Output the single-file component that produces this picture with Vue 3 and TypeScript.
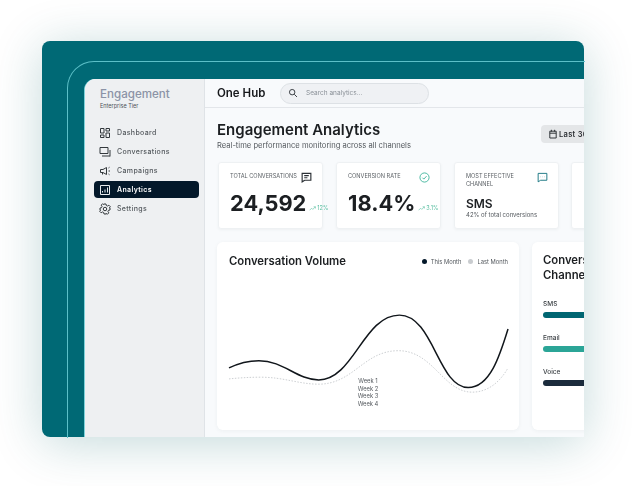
<template>
  <div class="page">
    <div class="frame">
      <div class="ring"></div>
      <div class="app">
        <!-- sidebar -->
        <aside class="sidebar">
          <div class="brand">Engagement</div>
          <div class="tier">Enterprise Tier</div>
          <nav class="menu">
            <div v-for="item in menus" :key="item.name" class="menu-item" :class="{ active: item.active }">
              <svg class="menu-icon" viewBox="0 0 24 24" fill="none" stroke="currentColor" stroke-width="2">
                <path :d="item.icon" />
              </svg>
              <span>{{ item.name }}</span>
            </div>
          </nav>
        </aside>

        <div class="main">
          <!-- top bar -->
          <header class="topbar">
            <div class="hub">One Hub</div>
            <div class="search">
              <svg class="search-icon" viewBox="0 0 24 24" fill="none" stroke="currentColor" stroke-width="2.4">
                <circle cx="10" cy="10" r="6.5" />
                <path d="M15 15l6.5 6.5" />
              </svg>
              <span>Search analytics...</span>
            </div>
          </header>

          <section class="content">
            <div class="title-row">
              <div>
                <h1>Engagement Analytics</h1>
                <p>Real-time performance monitoring across all channels</p>
              </div>
              <div class="date-btn">
                <svg class="date-icon" viewBox="0 0 20 24" fill="none" stroke="currentColor" stroke-width="2.4">
                  <path d="M2 5h16v17H2zM2 10h16M6 1.500V6M14 1.500V6" />
                </svg>
                <span>Last 30 Days</span>
              </div>
            </div>

            <!-- kpi cards -->
            <div class="cards">
              <div class="card">
                <div class="card-head">
                  <span class="card-label">TOTAL CONVERSATIONS</span>
                  <svg class="card-icon dark" viewBox="0 0 24 24" fill="none" stroke="currentColor" stroke-width="2.500">
                    <path d="M2.500 3h19v15H8l-5.500 3.500zM7 8h10M7 12.500h7" />
                  </svg>
                </div>
                <div class="value-row">
                  <span class="value">24,592</span>
                  <span class="trend">
                    <svg class="trend-icon" viewBox="0 0 12 8" fill="none" stroke="currentColor" stroke-width="1">
                      <path d="M1 7l3.500-3.500 2 2L11 1M8 1h3v3" />
                    </svg>
                    12%
                  </span>
                </div>
              </div>
              <div class="card">
                <div class="card-head">
                  <span class="card-label">CONVERSION RATE</span>
                  <svg class="card-icon green" viewBox="0 0 24 24" fill="none" stroke="currentColor" stroke-width="2">
                    <circle cx="12" cy="12" r="10" />
                    <path d="M7.500 12.500l3 3 6-6.500" />
                  </svg>
                </div>
                <div class="value-row">
                  <span class="value">18.4%</span>
                  <span class="trend">
                    <svg class="trend-icon" viewBox="0 0 12 8" fill="none" stroke="currentColor" stroke-width="1">
                      <path d="M1 7l3.500-3.500 2 2L11 1M8 1h3v3" />
                    </svg>
                    3.1%
                  </span>
                </div>
              </div>
              <div class="card">
                <div class="card-head">
                  <span class="card-label narrow">MOST EFFECTIVE CHANNEL</span>
                  <svg class="card-icon teal" viewBox="0 0 24 24" fill="none" stroke="currentColor" stroke-width="2">
                    <path d="M2.500 3h19v15H8l-5.500 3.500zM8 10.500h.5M12 10.500h.5M16 10.500h.5" />
                  </svg>
                </div>
                <div class="sms">SMS</div>
                <div class="sms-note">42% of total conversions</div>
              </div>
              <div class="card"></div>
            </div>

            <div class="panels">
              <div class="panel chart-panel">
                <div class="chart-head">
                  <h2>Conversation Volume</h2>
                  <div class="legend">
                    <span class="dot now"></span><span>This Month</span>
                    <span class="dot last"></span><span>Last Month</span>
                  </div>
                </div>
                <div class="chart">
                  <svg class="chart-svg" viewBox="0 0 280 100" fill="none">
                    <path class="line-now" d="M0 68C10 63 20 60.700 30 60.700C55 60.700 68 80 90 80C125 80 135 15 171 15C205 15 210 87.700 240 87.700C262 87.700 272 55 280 29" />
                    <path class="line-last" d="M0 79C10 78 20 77.300 32 77.300C55 77.300 70 84.300 90 84.300C125 84.300 135 50.700 170 50.700C205 50.700 215 92.300 244 92.300C260 92.300 272 82 280 68" />
                  </svg>
                  <div class="weeks">
                    <span v-for="w in weeks" :key="w">{{ w }}</span>
                  </div>
                </div>
              </div>

              <div class="panel channel-panel">
                <h2>Conversion by Channel</h2>
                <div v-for="c in channels" :key="c.name" class="channel">
                  <div class="channel-name">{{ c.name }}</div>
                  <div class="bar" :style="{ background: c.color }"></div>
                </div>
              </div>
            </div>
          </section>
        </div>
      </div>
    </div>
  </div>
</template>

<script setup lang="ts">
const menus = [
  { name: 'Dashboard', icon: 'M3 3h7v9H3zM14 3h7v5h-7zM14 12h7v9h-7zM3 16h7v5H3z' },
  { name: 'Conversations', icon: 'M2 3h16v12H2zM22 8v13M6 20h16' },
  { name: 'Campaigns', icon: 'M3 9h5l7-4v14l-7-4H3zM7 15v4M19 6l2-1.500M19 12h3M19 18l2 1.500' },
  { name: 'Analytics', icon: 'M3 3h18v18H3zM7 17v-3M12 17v-6M17 17V7', active: true },
  {
    name: 'Settings',
    icon: 'M10 2h4l.6 3 2.600 1.100 2.500-1.700 2.900 2.900-1.700 2.500L22 10v4l-3 .6-1.100 2.600 1.700 2.500-2.900 2.900-2.500-1.700L14 22h-4l-.6-3-2.600-1.100-2.500 1.700-2.900-2.900 1.700-2.500L2 14v-4l3-.6 1.100-2.600L4.400 4.300l2.900-2.900 2.100 1.700zM12 8.500a3.500 3.500 0 1 0 0 7 3.500 3.500 0 0 0 0-7z'
  }
]

const weeks = ['Week 1', 'Week 2', 'Week 3', 'Week 4']

const channels = [
  { name: 'SMS', color: '#006672' },
  { name: 'Email', color: '#2ba597' },
  { name: 'Voice', color: '#1b2b3c' }
]
</script>

<style>
html,
body {
  margin: 0;
  background: #fff;
}
</style>

<style scoped>
.page {
  width: 632px;
  height: 486px;
  padding: 41px 48px 49px 42px;
  box-sizing: border-box;
  overflow: hidden;
  background: #fff;
  font-family: Inter, "Liberation Sans", sans-serif;
  color: #1c1f22;
}

.frame {
  position: relative;
  height: 396px;
  padding: 38px 0 0 43px;
  box-sizing: border-box;
  background: #006975;
  border-radius: 8px;
  box-shadow: 0 6px 50px rgba(0, 95, 100, 0.24);
  filter: blur(0.3px);
}

.ring {
  position: absolute;
  left: 25px;
  top: 20px;
  width: 530px;
  height: 390px;
  border: 1px solid #5cc0c8;
  border-right: 0;
  border-bottom: 0;
  border-top-left-radius: 27px;
  clip-path: inset(0 13px 14px 0);
}

.app {
  position: relative;
  display: flex;
  width: 499px;
  height: 358px;
  overflow: hidden;
  background: #f8fafc;
  border-top-left-radius: 11px;
  box-shadow: -1px 0 0 #7fd2da;
}

.sidebar {
  flex: none;
  width: 120px;
  padding: 8px 5px 0 9px;
  box-sizing: border-box;
  background: #eef0f2;
  border-right: 1px solid #dfe3e7;
}

.brand {
  padding-left: 6px;
  font-size: 11.600px;
  font-weight: 500;
  line-height: 15px;
  color: #8b93a6;
}

.tier {
  padding-left: 6px;
  font-size: 5.500px;
  line-height: 9px;
  color: #4d5257;
}

.menu {
  margin-top: 13px;
  display: flex;
  flex-direction: column;
  gap: 2px;
}

.menu-item {
  display: flex;
  align-items: center;
  gap: 6px;
  height: 17px;
  padding-left: 5px;
  border-radius: 4px;
  font-size: 7px;
  font-weight: 500;
  letter-spacing: 0.35px;
  color: #54595e;
}

.menu-item.active {
  background: #03182a;
  color: #fff;
  font-weight: 600;
}

.menu-icon {
  width: 12px;
  height: 12px;
  flex: none;
  color: #33383c;
}

.menu-item.active .menu-icon {
  color: #e8ecef;
}

.main {
  flex: none;
  width: 420px;
}

.topbar {
  display: flex;
  align-items: center;
  height: 29px;
  box-sizing: border-box;
  padding-left: 12px;
  gap: 15px;
  background: #f8fafc;
  border-bottom: 1px solid #e3e6ea;
}

.hub {
  width: 48px;
  font-size: 11.500px;
  font-weight: 600;
  white-space: nowrap;
  color: #17191c;
}

.search {
  display: flex;
  align-items: center;
  gap: 8px;
  width: 149px;
  height: 21px;
  padding-left: 7px;
  box-sizing: border-box;
  background: #eff1f4;
  border: 1px solid #dde1e5;
  border-radius: 11px;
  font-size: 6.500px;
  color: #8a9097;
}

.search-icon {
  width: 10px;
  height: 10px;
  color: #3c4146;
}

.content {
  padding: 12px 0 0 12px;
}

.title-row {
  display: flex;
  justify-content: space-between;
  height: 42px;
  width: 394px;
}

h1 {
  margin: 0;
  font-size: 15px;
  font-weight: 600;
  line-height: 19px;
  color: #1c1f22;
}

.title-row p {
  margin: 2px 0 0;
  font-size: 7.600px;
  line-height: 10px;
  color: #54595e;
}

.date-btn {
  display: flex;
  align-items: center;
  flex: none;
  gap: 2px;
  width: 70px;
  height: 18px;
  margin-top: 5px;
  padding-left: 8px;
  box-sizing: border-box;
  background: #e4e6e8;
  border-radius: 4px;
  font-size: 7.500px;
  font-weight: 600;
  white-space: nowrap;
  letter-spacing: 0.3px;
  color: #2b2f33;
}

.date-icon {
  width: 8px;
  height: 10px;
  flex: none;
}

.cards {
  display: flex;
  gap: 13px;
  margin-left: 1px;
}

.card {
  flex: none;
  width: 105px;
  height: 67px;
  padding: 10px 0 0 11px;
  box-sizing: border-box;
  background: #fff;
  border: 1px solid #eef1f3;
  border-radius: 3px;
  box-shadow: 0 1px 3px rgba(30, 50, 60, 0.05);
}

.card:nth-child(4) {
  margin-left: -1px;
}

.card-head {
  display: flex;
  justify-content: space-between;
  height: 27px;
  padding-right: 10px;
}

.card-label {
  font-size: 5.600px;
  line-height: 7.500px;
  color: #5b6065;
}

.card-label.narrow {
  width: 60px;
}

.card-icon {
  width: 11px;
  height: 11px;
  flex: none;
  margin-top: -1px;
}

.dark {
  color: #2b3035;
}

.green {
  color: #3eb59b;
}

.teal {
  color: #12727e;
}

.value-row {
  display: flex;
  align-items: flex-end;
  gap: 3px;
  margin-top: -11px;
  white-space: nowrap;
}

.value {
  font-size: 21.800px;
  font-weight: 700;
  line-height: 29px;
  color: #1c1f22;
}

.trend {
  display: flex;
  align-items: center;
  gap: 1px;
  padding-bottom: 7px;
  font-size: 5.500px;
  color: #55bd9f;
}

.trend-icon {
  width: 7px;
  height: 5px;
}

.sms {
  margin-top: -3px;
  font-size: 12px;
  font-weight: 600;
  line-height: 14px;
}

.sms-note {
  font-size: 6px;
  line-height: 8px;
  color: #54595e;
}

.panels {
  display: flex;
  gap: 13px;
  margin-top: 13px;
}

.panel {
  flex: none;
  height: 188px;
  box-sizing: border-box;
  background: #fff;
  border-radius: 6px;
  box-shadow: 0 1px 4px rgba(30, 50, 60, 0.05);
}

.chart-panel {
  position: relative;
  width: 302px;
  padding: 12px 11px 0 12px;
}

.chart-head {
  display: flex;
  justify-content: space-between;
  align-items: center;
}

h2 {
  margin: 0;
  font-size: 11.300px;
  font-weight: 600;
  line-height: 15px;
  color: #1c1f22;
}

.legend {
  display: flex;
  align-items: center;
  font-size: 5.800px;
  color: #54595e;
}

.dot {
  width: 5px;
  height: 5px;
  margin-right: 4px;
  border-radius: 50%;
}

.dot.now {
  background: #03182a;
}

.dot.last {
  margin-left: 7px;
  background: #c9cccf;
}

.chart {
  position: relative;
  margin-top: 31px;
}

.chart-svg {
  display: block;
  width: 279px;
  height: 100px;
  overflow: visible;
}

.line-now {
  stroke: #11161b;
  stroke-width: 1.500;
}

.line-last {
  stroke: #a9afb4;
  stroke-width: 0.600;
  stroke-dasharray: 1.500 1.500;
}

.weeks {
  position: absolute;
  left: 119px;
  top: 77px;
  width: 40px;
  display: flex;
  flex-direction: column;
  align-items: center;
  font-size: 5.800px;
  line-height: 7.600px;
  color: #54595e;
}

.channel-panel {
  width: 110px;
  padding: 11px 0 0 11px;
  overflow: hidden;
}

.channel-panel h2 {
  width: 90px;
  margin-bottom: 17px;
}

.channel {
  height: 34px;
}

.channel-name {
  font-size: 6.500px;
  font-weight: 500;
  line-height: 9px;
  color: #3d4246;
}

.bar {
  width: 100%;
  height: 6px;
  margin-top: 3px;
  border-radius: 3px;
}
</style>
